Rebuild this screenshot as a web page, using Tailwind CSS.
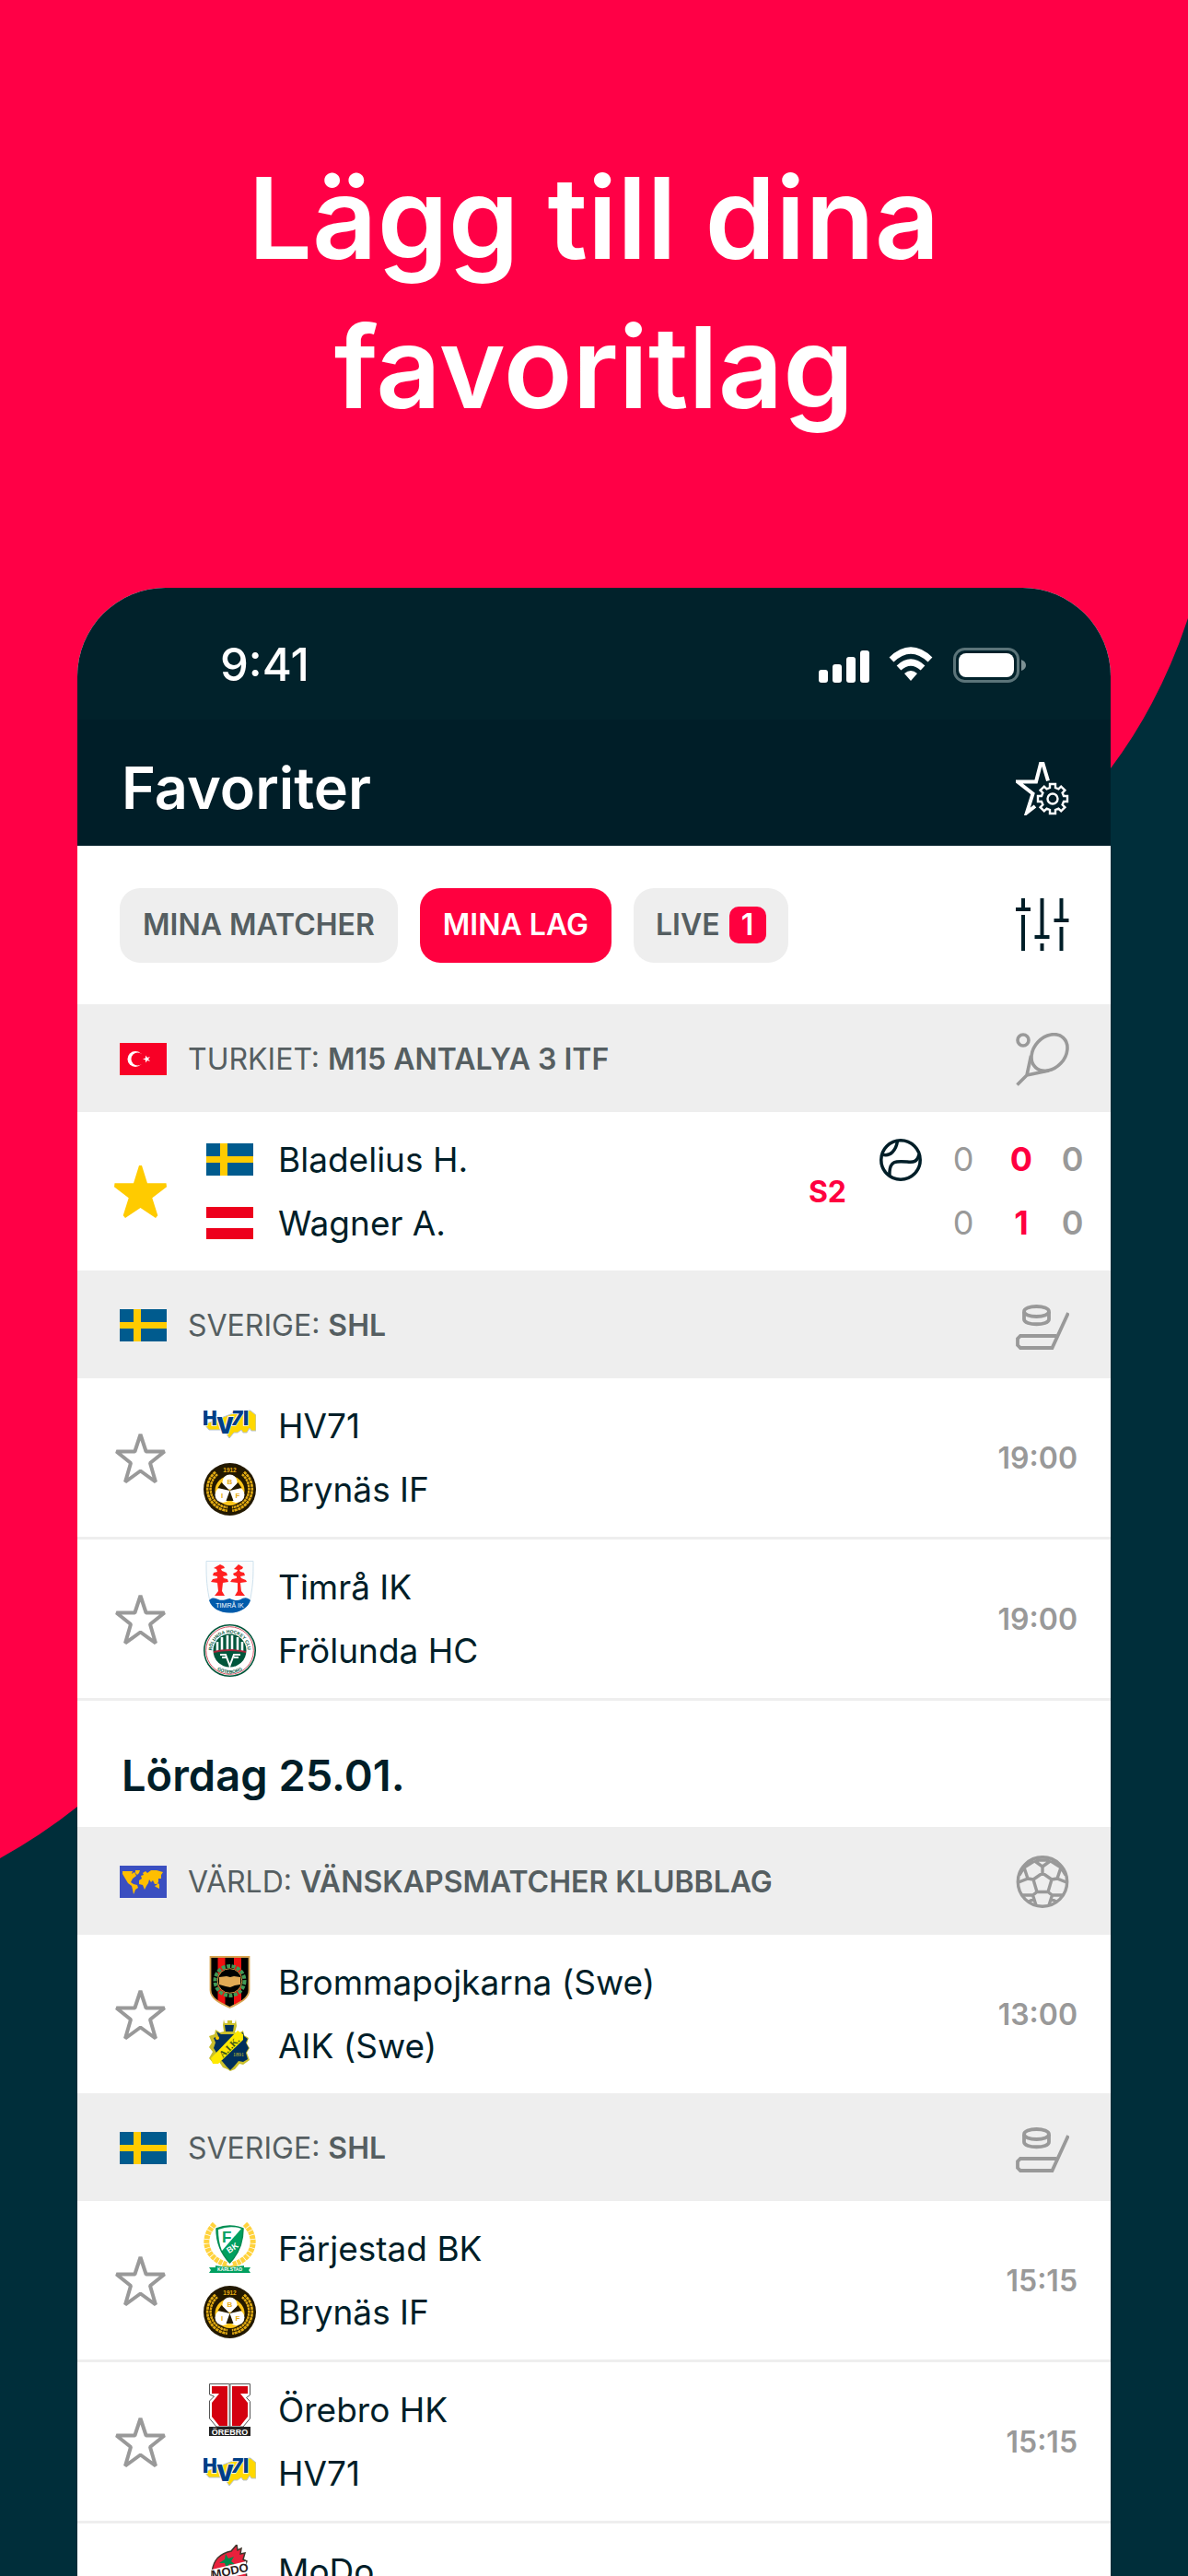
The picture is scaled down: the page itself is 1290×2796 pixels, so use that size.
<!DOCTYPE html>
<html lang="sv">
<head>
    <meta charset="UTF-8">
    <meta name="viewport" content="width=device-width, initial-scale=1.0">
    <title>Favoriter</title>
    <script src="https://cdn.jsdelivr.net/npm/@tailwindcss/browser@4"></script>
</head>
<body class="bg-[#002e3a] font-['Inter','Noto_Sans',sans-serif]">

    <!-- Shared icons, flags and club badges -->
    <svg class="hidden">
        <symbol id="star" viewBox="0 0 57 57">
            <path d="M28.5 3l6.1 18.5h20L39 34l6 20.5-16.5-12-16.5 12 6-20.5L2.4 21.5h20z" fill="none" stroke="#999" stroke-width="4" stroke-linejoin="bevel"/>
        </symbol>
        <symbol id="star-filled" viewBox="0 0 57 57">
            <path d="M27 0h3l6 19.3h20.500l.5 4-15.700 12 6 19-2.300 2.700-16.500-11-16.500 11-2.300-2.700 6-19L0 23.300l.5-4H21z" fill="#ffcb00"/>
        </symbol>
        <symbol id="racket" viewBox="0 0 58 58">
            <g fill="none" stroke="#999" stroke-width="3.600">
                <circle cx="8" cy="8" r="6"/>
                <ellipse cx="36.500" cy="21.500" rx="22" ry="17" transform="rotate(-47 36.500 21.500)"/>
                <path d="M16.500 25L12 46l24-5M12 46L1.500 56.500" stroke-linejoin="round"/>
            </g>
        </symbol>
        <symbol id="hockey" viewBox="0 0 58 58">
            <g fill="none" stroke="#999" stroke-width="3.800">
                <ellipse cx="22.500" cy="13.500" rx="13.500" ry="5.500"/>
                <path d="M9 14v8c0 7 27 7 27 0v-8"/>
                <path d="M57 15L39.500 53H5l-3-3v-7l3-3h39"/>
            </g>
        </symbol>
        <symbol id="soccer" viewBox="0 0 58 58">
            <g fill="none" stroke="#999" stroke-width="3.400">
                <circle cx="29" cy="28.500" r="26.700"/>
                <path d="M29 19l10 7-4 13.500H23L19 26zM29 19v-7l-9-6.500M29 12l9-6.500M22 5h14M20 6L9 13l4 12-10 4M13 25l6 1M9 13L4 21M38 6l11 7-4 12 10 4M45 25l-6 1M49 13l5 8M23 39.500L18.500 43H6M18.500 43L22 54M14 50l6-3M35 39.500l4.500 3.500H52M39.500 43L36 54M44 50l-6-3"/>
            </g>
        </symbol>
        <symbol id="se" viewBox="0 0 51 35">
            <path fill="#005b8e" d="M0 0h51v35H0z"/>
            <path fill="#ffcb00" d="M15 0h8v35h-8zM0 14h51v7H0z"/>
        </symbol>
        <symbol id="hv71" viewBox="0 0 57 57">
            <path d="M1 27l5 6h13l5 3 4 6 5-6h4l4-3 2 3h4l3-5 2 3h5V17l-6-5H40z" fill="#ffd800" stroke="#b9c4cf"/>
            <g fill="#003f87" stroke="#fff" stroke-width="1.500" paint-order="stroke" font-family="Inter, sans-serif" font-weight="900">
                <text x="-1" y="28" font-size="21">H</text>
                <text x="30" y="28" font-size="21" font-style="italic">7</text>
                <text x="43" y="28" font-size="21">I</text>
                <text x="14" y="37" font-size="24">V</text>
            </g>
        </symbol>
        <symbol id="brynas" viewBox="0 0 57 57">
            <circle cx="28.500" cy="28.500" r="28.500" fill="#231900"/>
            <path d="M14 11a22 22 0 0 0 12 39M43 11a22 22 0 0 1-12 39" fill="none" stroke="#e0a912" stroke-width="6" stroke-dasharray="3 .6"/>
            <path d="M14 11a22 22 0 0 0 12 39M43 11a22 22 0 0 1-12 39" fill="none" stroke="#231900"/>
            <circle cx="28.500" cy="30" r="16" fill="#ffc61a"/>
            <g fill="#fff">
                <circle cx="28.500" cy="20.500" r="8"/>
                <circle cx="21" cy="34.500" r="8.500"/>
                <circle cx="36" cy="34.500" r="8.500"/>
            </g>
            <path d="M28.500 30l-13-3 4-6zM28.500 30l13-3-4-6zM28.500 30l-4 11h8z" fill="#231900"/>
            <g fill="#e8ae14" font-family="Liberation Sans, sans-serif" font-weight="700" text-anchor="middle">
                <text x="28.500" y="10" font-size="6.500">1912</text>
                <text x="28.500" y="23" font-size="8">B</text>
                <text x="20" y="38" font-size="8">I</text>
                <text x="37" y="38" font-size="8">F</text>
            </g>
        </symbol>
        <symbol id="timra" viewBox="0 0 57 57">
            <path d="M3 .5h51c0 16 0 24-3 40-2 10-12 16-22.500 16S8 50 6 40C3 24 3 16 3 .5z" fill="#fafcfd" stroke="#cfe2ee"/>
            <path d="M6 43c4-4 7-2 10-1 4 2 8 0 12.500-1 4 2 8 3 12 1 3-2 7-3 10.500 1-3 9-12 13.500-22.500 13.500S9 52 6 43z" fill="#005bab"/>
            <g fill="#ff2020">
                <path d="M18 4l4 2 1 2-4 1 1 2 5 2 1 3-5 1 1 2 4 1 1 3-6 1-1 9 3 5H12l4-5-1-9-7-1 2-3 5-1v-2l-5-1 1-3 4-1-1-3-3-1z"/>
                <path d="M38 4l5 3-1 2-3 1 1 2 4 1 1 3-5 1 1 2 5 2 1 2-7 1 1 9 4 5H34l3-5v-9l-8-1 2-3 5-1v-2l-3-1-1-2 4-2 1-2-4-1z"/>
            </g>
            <text x="28.500" y="51" font-size="7" fill="#fff" font-family="Liberation Sans, sans-serif" text-anchor="middle">TIMRÅ IK</text>
        </symbol>
        <symbol id="frolunda" viewBox="0 0 57 57">
            <circle cx="28.500" cy="28.500" r="27.700" fill="#fff" stroke="#00563b" stroke-width="1.600"/>
            <circle cx="28.500" cy="28.500" r="25.800" fill="none" stroke="#c8283c" stroke-width=".8"/>
            <path id="arc-top" d="M9 29a19.500 19.500 0 0 1 39 0" fill="none"/>
            <path id="arc-bottom" d="M4 29a24.500 24.500 0 0 0 49 0" fill="none"/>
            <g fill="#00563b" font-family="Liberation Sans, sans-serif" font-weight="700" text-anchor="middle">
                <text font-size="5"><textPath href="#arc-top" startOffset="50%">FRÖLUNDA HOCKEY CLUB</textPath></text>
                <text font-size="5"><textPath href="#arc-bottom" startOffset="50%">GÖTEBORG</textPath></text>
            </g>
            <circle cx="28.500" cy="28.500" r="18" fill="#00563b"/>
            <path d="M15 19v10M20 14v14M26 12v16M31 12v16M37 14v14M42 19v10" stroke="#fff" stroke-width="2.600"/>
            <path d="M11 30q17.500-4 35 0" fill="none" stroke="#a5243a" stroke-width="1.800"/>
            <path d="M18 33h6l4.500 12L33 33h7M20 36h5M33 36h5" fill="none" stroke="#fff" stroke-width="2"/>
        </symbol>
        <symbol id="bp" viewBox="0 0 57 57">
            <path d="M7.500 1h42v36c0 9-10 14-21 19-11-5-21-10-21-19z" fill="#000"/>
            <path d="M15.500 1h8v53l-8-5zM33 1h8v48l-8 5z" fill="#f01010"/>
            <path d="M7.500 1h42v36c0 9-10 14-21 19-11-5-21-10-21-19z" fill="none" stroke="#d9a552" stroke-width="1.800"/>
            <circle cx="28.500" cy="27" r="13.500" fill="#000"/>
            <circle cx="28.500" cy="27" r="16" fill="none" stroke="#3f9a55" stroke-width="4" stroke-dasharray="4 1.500"/>
            <circle cx="28.500" cy="27" r="13.300" fill="none" stroke="#c79a45"/>
            <path d="M17 23l8-1 4 1 4-1 7 1v8l-6 1-5 2-5-1-7-2z" fill="#e2aa55"/>
        </symbol>
        <symbol id="aik" viewBox="0 0 57 57">
            <path d="M22 0l1 4h3V1h5v3h3l1-4 1 7-2 7 4 1 5-3 1 5 5 3-2 6 3 5-3 5 3 8-7 5-4-1-5 6-5 2-3-2-5-2-4-6-6 2-5-6 4-7-4-5 3-5-3-7 6-2 1-5 5 3 4-1-1-7z" fill="#c9bf2c"/>
            <path d="M23 6h10l-1 7H24zM14 13l5 3h19l5-2 1 4 4 3-2 4 3 6-3 5 2 7-5 3-5-1-5 6-4 4-4-4-5-6-6 1-3-4 3-6-3-5 2-6-2-5 5-2z" fill="#00305c"/>
            <path d="M8 42L37 12l6 4v6L16 48l-6 0z" fill="#ffe900"/>
            <text x="29" y="33" font-size="10" font-weight="700" fill="#33501e" font-family="Liberation Serif, serif" text-anchor="middle" transform="rotate(-45 29 31)">A.I.K.</text>
            <text x="38" y="40" font-size="6" fill="#c9bf2c" font-family="Liberation Serif, serif" text-anchor="middle">1891</text>
            <circle cx="15" cy="20" r="2" fill="#ffcb00"/>
        </symbol>
        <symbol id="farjestad" viewBox="0 0 57 57">
            <path d="M12 2C-2 16 0 38 25 46M45 2c14 14 12 36-13 44" fill="none" stroke="#ffd23c" stroke-width="6" stroke-dasharray="4 .8"/>
            <path d="M22 46l16 6M35 46l-16 6" stroke="#ffd23c" stroke-width="1.500"/>
            <path d="M14 7q14.500-6 29 0 0 22-14.500 37Q14 29 14 7z" fill="#00a060" stroke="#008a50" stroke-width="1.500"/>
            <path d="M16 8q13-5 25-1L20 31q-4-10-4-23z" fill="#fff"/>
            <g fill="#00a060" font-family="Liberation Sans, sans-serif" font-weight="700">
                <text x="20" y="22" font-size="17">F</text>
                <text x="26" y="32" font-size="9" fill="#fff" transform="rotate(-35 30 30)">BK</text>
            </g>
            <path d="M6 49h7v-2q15 3 31 0v2h7l-2 3 2 3H6l2-3z" fill="#00a060"/>
            <text x="28.500" y="53" font-size="5" font-weight="700" fill="#fff" font-family="Liberation Sans, sans-serif" text-anchor="middle">KARLSTAD</text>
        </symbol>
        <symbol id="orebro" viewBox="0 0 57 57">
            <path d="M6.500.500h44v12l-4 3 4 4V38L43 47H14l-7.500-9V19l5-5-5-2z" fill="#fff" stroke="#555"/>
            <path d="M9 3h17v43H17L9 36V21l8-10H9zM31 3h17v8h-8l8 10v15l-8 10h-9z" fill="#d4000f"/>
            <path d="M28.500 0v47" stroke="#777" stroke-width="2"/>
            <path d="M6 47h45v10H6z" fill="#222"/>
            <text x="28.500" y="55.500" font-size="9" font-weight="700" fill="#fff" font-family="Liberation Sans, sans-serif" text-anchor="middle">ÖREBRO</text>
        </symbol>
        <symbol id="modo" viewBox="0 0 57 57">
            <path d="M9 34c0-14 5-22 17-26l4-1 6-7 1 6 4-2-1 6 5-1-2 7 4 2-2 6c4 12 0 24-6 33H15C10 50 8 44 9 34z" fill="#e8213c" stroke="#40362c" stroke-width="1.500"/>
            <path d="M24 10l3 5 6-2-3 5 5 4-7-1-3 5-2-6-6 0 6-4z" fill="#00894a"/>
            <path d="M20 40l20-6-3 12-14 4z" fill="#00894a"/>
            <path d="M9 27l37-9 2 13-38 9z" fill="#fff"/>
            <text x="29" y="33" font-size="13" font-weight="700" fill="#2a211b" font-family="Liberation Sans, sans-serif" text-anchor="middle" transform="rotate(-12 29 30)">MODO</text>
        </symbol>
    </svg>

    <main class="relative flex h-screen flex-col overflow-hidden">
        <svg class="absolute inset-0 -z-10 size-full" viewBox="0 0 1290 2796" preserveAspectRatio="none" aria-hidden="true">
            <path fill="#ff0046" d="M0 0h1290v671q-30 91-84 163Q800 1500 84 1961q-39 31-84 56z"/>
        </svg>

        <h1 class="pt-[156px] pb-[158px] text-center text-[123px] leading-[162px] font-semibold text-white">Lägg till dina<br>favoritlag</h1>

        <div class="mx-21 flex-1 shrink-0 rounded-t-[96px] bg-white">
            <!-- Status bar -->
            <div class="flex h-[143px] items-center justify-between rounded-t-[96px] bg-[#01222b] pt-6 pr-[92px] pl-[155px] text-white">
                <span class="text-[49px] leading-none font-medium">9:41</span>
                <svg class="h-10 w-[226px]" viewBox="0 0 226 40" fill="#fff">
                    <rect x="1" y="25" width="10" height="14" rx="3"/>
                    <rect x="16" y="19" width="10" height="20" rx="3"/>
                    <rect x="31" y="11" width="10" height="28" rx="3"/>
                    <rect x="46" y="4" width="10" height="35" rx="3"/>
                    <g fill="none" stroke="#fff" stroke-width="7">
                        <path d="M80 14q21-20 42 0"/>
                        <path d="M88 23q13-12 26 0"/>
                    </g>
                    <path d="M94 29q7-6 14 0l-7 8z"/>
                    <rect x="148.500" y="2.500" width="69" height="35" rx="11" fill="none" stroke="#5b7479" stroke-width="3"/>
                    <rect x="153" y="7" width="60" height="26" rx="8"/>
                    <path d="M221 14q5 2 5 6t-5 6z" fill="#7d9195"/>
                </svg>
            </div>

            <header class="flex h-[137px] items-center justify-between bg-[#001e28] pt-3 pr-[45px] pl-12 text-white">
                <h2 class="text-[63px] leading-none font-semibold">Favoriter</h2>
                <button type="button" aria-label="Hantera favoriter">
                    <svg class="size-[58px]" viewBox="0 0 58 58" fill="none" stroke="#fff">
                        <path d="M35 20.500L29.500 2h-2.500L22 21.500H2l16.500 13L12 55l9-7" stroke-width="4"/>
                        <g transform="translate(40 40)" stroke-width="2.400">
                            <path d="M-3-12v-4h6v4l3.400 1.400 2.800-2.800 4.200 4.200-2.800 2.800L12-3h4v6h-4l-1.400 3.400 2.800 2.800-4.200 4.200-2.800-2.800L3 12v4h-6v-4l-3.400-1.400-2.800 2.800-4.200-4.200 2.800-2.800L-12 3h-4v-6h4l1.400-3.400-2.800-2.800 4.200-4.200 2.800 2.800z"/>
                            <circle r="5.500"/>
                        </g>
                    </svg>
                </button>
            </header>

            <div class="flex h-[172px] items-center gap-6 pr-[45px] pl-[46px] text-[32px] font-semibold text-[#555e61]">
                <button type="button" class="h-[81px] rounded-[22px] bg-[#eee] px-[25px]">MINA MATCHER</button>
                <button type="button" class="h-[81px] rounded-[22px] bg-[#ff003f] px-[25px] text-white">MINA LAG</button>
                <button type="button" class="flex h-[81px] items-center gap-2.5 rounded-[22px] bg-[#eee] px-6">LIVE <span class="flex size-10 items-center justify-center rounded-[10px] bg-[#ff003f] leading-none text-white">1</span></button>
                <button type="button" class="ml-auto" aria-label="Filter">
                    <svg class="size-[58px]" viewBox="0 0 58 58" fill="none" stroke="#001e28" stroke-width="4">
                        <path d="M8 0v14M0 12h16M8 18v39M28.500 0v43M20.500 42h16M28.500 49v8M49.500 0v25M41.500 24h16M49.500 31v26"/>
                    </svg>
                </button>
            </div>

            <!-- Turkiet -->
            <h3 class="flex h-[117px] items-center bg-[#eee] pt-0.5 pr-[45px] pl-[46px] text-[32px] font-normal text-[#555e61]">
                <svg class="mr-[23px] h-[35px] w-[51px]" viewBox="0 0 51 35">
                    <path fill="#f80026" d="M0 0h51v35H0z"/>
                    <circle cx="17" cy="17.500" r="8.500" fill="#fff"/>
                    <circle cx="19.500" cy="17.500" r="7" fill="#f80026"/>
                    <path d="M25 17.500l3-1 0-3 2 2.500 3-1-2 2.500 2 2.500-3-1-2 2.500 0-3z" fill="#fff"/>
                </svg>
                <span>TURKIET: <b class="font-semibold">M15 ANTALYA 3 ITF</b></span>
                <svg class="ml-auto size-[58px]"><use href="#racket"/></svg>
            </h3>
            <div class="flex h-[172px] items-center pr-[18px] pl-10 text-[37px] leading-[69px] text-[#001e28]">
                <button type="button" aria-label="Ta bort favorit"><svg class="size-[57px]"><use href="#star-filled"/></svg></button>
                <div class="ml-10 grid grid-cols-[57px_auto] items-center gap-x-6">
                    <svg class="h-[35px] w-[51px] justify-self-center"><use href="#se"/></svg><span>Bladelius H.</span>
                    <svg class="h-[35px] w-[51px] justify-self-center" viewBox="0 0 51 35"><path fill="#ed001c" d="M0 0h51v35H0z"/><path fill="#fff" d="M0 12h51v11H0z"/></svg><span>Wagner A.</span>
                </div>
                <span class="mr-9 ml-auto text-[32px] font-bold text-[#ff003f]">S2</span>
                <div class="grid grid-cols-[60px_62px_64px_47px] items-center text-center text-[36px] text-[#999]">
                    <svg class="size-[46px]" viewBox="0 0 46 46" fill="none" stroke="#001e28" stroke-width="3.500">
                        <circle cx="23" cy="23" r="21.200"/>
                        <path d="M19.500 2.500C18 12 12 20 3 17M43 17c-2 8-6 9-13 8-11-1-20-2-19 15"/>
                    </svg>
                    <span>0</span><b class="text-[#ff003f]">0</b><b class="font-semibold">0</b>
                    <span class="col-start-2">0</span><b class="text-[#ff003f]">1</b><b class="font-semibold">0</b>
                </div>
            </div>

            <!-- Sverige -->
            <h3 class="flex h-[117px] items-center bg-[#eee] pt-0.5 pr-[45px] pl-[46px] text-[32px] font-normal text-[#555e61]">
                <svg class="mr-[23px] h-[35px] w-[51px]"><use href="#se"/></svg>
                <span>SVERIGE: <b class="font-semibold">SHL</b></span>
                <svg class="ml-auto size-[58px]"><use href="#hockey"/></svg>
            </h3>
            <div class="flex h-[175px] items-center border-b-3 border-[#eee] pr-9 pl-10 text-[37px] leading-[69px] text-[#001e28]">
                <button type="button" aria-label="Lägg till favorit"><svg class="size-[57px]"><use href="#star"/></svg></button>
                <div class="ml-10 grid grid-cols-[57px_auto] items-center gap-x-6">
                    <svg class="size-[57px]"><use href="#hv71"/></svg><span>HV71</span>
                    <svg class="size-[57px]"><use href="#brynas"/></svg><span>Brynäs IF</span>
                </div>
                <time class="ml-auto text-[32px] font-semibold text-[#999]">19:00</time>
            </div>
            <div class="flex h-[175px] items-center border-b-3 border-[#eee] pr-9 pl-10 text-[37px] leading-[69px] text-[#001e28]">
                <button type="button" aria-label="Lägg till favorit"><svg class="size-[57px]"><use href="#star"/></svg></button>
                <div class="ml-10 grid grid-cols-[57px_auto] items-center gap-x-6">
                    <svg class="size-[57px]"><use href="#timra"/></svg><span>Timrå IK</span>
                    <svg class="size-[57px]"><use href="#frolunda"/></svg><span>Frölunda HC</span>
                </div>
                <time class="ml-auto text-[32px] font-semibold text-[#999]">19:00</time>
            </div>

            <h2 class="flex h-[137px] items-center pt-6 pl-12 text-[47px] leading-none font-semibold text-[#001e28]">Lördag 25.01.</h2>

            <!-- Värld -->
            <h3 class="flex h-[117px] items-center bg-[#eee] pt-0.5 pr-[45px] pl-[46px] text-[32px] font-normal text-[#555e61]">
                <svg class="mr-[23px] h-[35px] w-[51px]" viewBox="0 0 51 35">
                    <path fill="#3b4fc0" d="M0 0h51v35H0z"/>
                    <path fill="#ffbe00" d="M3 6l6 0 5 0-1 3 3-2 2 4-4 3-2 4 3 2 4 1 1 3-3 2-1 3-1 2-1-5-1-4-4-3-3-5-3-5zM17 5l5 0-1 3-2 2-2-2zM25 8l3-2 2 2 4-3 6 0 7 2-2 3 0 4-3 0 0 4-2 2-2 0-2-4-2 2-2-3-1 4-2 3-2 4-2-5-4-1 0-4 3-2-1-3 3-1zM38 22l2-1 1-2 2 1 0 5-4-2z"/>
                </svg>
                <span>VÄRLD: <b class="font-semibold">VÄNSKAPSMATCHER KLUBBLAG</b></span>
                <svg class="ml-auto size-[58px]"><use href="#soccer"/></svg>
            </h3>
            <div class="flex h-[172px] items-center pr-9 pl-10 text-[37px] leading-[69px] text-[#001e28]">
                <button type="button" aria-label="Lägg till favorit"><svg class="size-[57px]"><use href="#star"/></svg></button>
                <div class="ml-10 grid grid-cols-[57px_auto] items-center gap-x-6">
                    <svg class="size-[57px]"><use href="#bp"/></svg><span>Brommapojkarna (Swe)</span>
                    <svg class="size-[57px]"><use href="#aik"/></svg><span>AIK (Swe)</span>
                </div>
                <time class="ml-auto text-[32px] font-semibold text-[#999]">13:00</time>
            </div>

            <!-- Sverige -->
            <h3 class="flex h-[117px] items-center bg-[#eee] pt-0.5 pr-[45px] pl-[46px] text-[32px] font-normal text-[#555e61]">
                <svg class="mr-[23px] h-[35px] w-[51px]"><use href="#se"/></svg>
                <span>SVERIGE: <b class="font-semibold">SHL</b></span>
                <svg class="ml-auto size-[58px]"><use href="#hockey"/></svg>
            </h3>
            <div class="flex h-[175px] items-center border-b-3 border-[#eee] pr-9 pl-10 text-[37px] leading-[69px] text-[#001e28]">
                <button type="button" aria-label="Lägg till favorit"><svg class="size-[57px]"><use href="#star"/></svg></button>
                <div class="ml-10 grid grid-cols-[57px_auto] items-center gap-x-6">
                    <svg class="size-[57px]"><use href="#farjestad"/></svg><span>Färjestad BK</span>
                    <svg class="size-[57px]"><use href="#brynas"/></svg><span>Brynäs IF</span>
                </div>
                <time class="ml-auto text-[32px] font-semibold text-[#999]">15:15</time>
            </div>
            <div class="flex h-[175px] items-center border-b-3 border-[#eee] pr-9 pl-10 text-[37px] leading-[69px] text-[#001e28]">
                <button type="button" aria-label="Lägg till favorit"><svg class="size-[57px]"><use href="#star"/></svg></button>
                <div class="ml-10 grid grid-cols-[57px_auto] items-center gap-x-6">
                    <svg class="size-[57px]"><use href="#orebro"/></svg><span>Örebro HK</span>
                    <svg class="size-[57px]"><use href="#hv71"/></svg><span>HV71</span>
                </div>
                <time class="ml-auto text-[32px] font-semibold text-[#999]">15:15</time>
            </div>
            <div class="flex h-[172px] pt-[17px] pl-[137px] text-[37px] leading-[69px] text-[#001e28]">
                <div class="flex h-[69px] items-center gap-6">
                    <svg class="size-[57px]"><use href="#modo"/></svg><span>MoDo</span>
                </div>
            </div>
        </div>
    </main>
</body>
</html>
